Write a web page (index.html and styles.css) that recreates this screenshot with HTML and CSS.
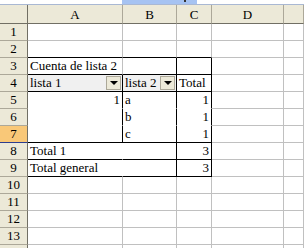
FILE: index.html
```html
<!DOCTYPE html>
<html>
<head>
<meta charset="utf-8">
<link rel="stylesheet" href="styles.css">
</head>
<body>
<div class="sheet">
  <div class="strip"><div class="strip-white"></div><div class="strip-blue"><span class="mark"></span></div><div class="strip-rest"></div></div>
  <div class="grid">
    <div class="ch corner"></div><div class="ch">A</div><div class="ch">B</div><div class="ch">C</div><div class="ch">D</div><div class="ch last"></div>

    <div class="rh">1</div><div class="c"></div><div class="c"></div><div class="c"></div><div class="c"></div><div class="c"></div>
    <div class="rh">2</div><div class="c bb"></div><div class="c bb"></div><div class="c bb"></div><div class="c"></div><div class="c"></div>

    <div class="rh">3</div><div class="c bb">Cuenta de lista 2</div><div class="c bb br"></div><div class="c bb br"></div><div class="c"></div><div class="c"></div>

    <div class="rh">4</div>
    <div class="c bb br fld">lista 1<span class="dd"><span class="tri"></span></span></div>
    <div class="c bb br fld">lista 2<span class="dd"><span class="tri"></span></span></div>
    <div class="c bb br">Total</div><div class="c"></div><div class="c"></div>

    <div class="rh">5</div><div class="c nb br num">1</div><div class="c nb br">a</div><div class="c nb br num">1</div><div class="c"></div><div class="c"></div>
    <div class="rh">6</div><div class="c nb br"></div><div class="c nb br">b</div><div class="c nb br num">1</div><div class="c"></div><div class="c"></div>
    <div class="rh sel">7</div><div class="c bb br"></div><div class="c bb br">c</div><div class="c bb br num">1</div><div class="c"></div><div class="c"></div>

    <div class="rh">8</div><div class="c bb nr">Total 1</div><div class="c bb br"></div><div class="c bb br num">3</div><div class="c"></div><div class="c"></div>
    <div class="rh">9</div><div class="c bb nr">Total general</div><div class="c bb br"></div><div class="c bb br num">3</div><div class="c"></div><div class="c"></div>

    <div class="rh">10</div><div class="c"></div><div class="c"></div><div class="c"></div><div class="c"></div><div class="c"></div>
    <div class="rh">11</div><div class="c"></div><div class="c"></div><div class="c"></div><div class="c"></div><div class="c"></div>
    <div class="rh">12</div><div class="c"></div><div class="c"></div><div class="c"></div><div class="c"></div><div class="c"></div>
    <div class="rh">13</div><div class="c"></div><div class="c"></div><div class="c"></div><div class="c"></div><div class="c"></div>
    <div class="rh"></div><div class="c"></div><div class="c"></div><div class="c"></div><div class="c"></div><div class="c"></div>
  </div>
</div>
</body>
</html>
```

FILE: styles.css
```css
html, body {
  margin: 0;
  padding: 0;
  background: #ffffff;
  overflow: hidden;
}
.sheet {
  width: 304px;
  height: 248px;
  overflow: hidden;
  font-family: "Liberation Serif", "Times New Roman", serif;
  font-size: 13px;
  color: #000000;
}
.strip {
  display: flex;
  height: 4px;
  border-bottom: 1px solid #a9b8d3;
}
.strip-white {
  width: 122px;
  background: #ffffff;
}
.strip-blue {
  width: 75px;
  background: #a6c3f2;
  position: relative;
}
.mark {
  position: absolute;
  left: 62px;
  top: 0;
  width: 2px;
  height: 2px;
  background: #333333;
}
.strip-rest {
  flex: 1;
  background: #ffffff;
}
.grid {
  display: grid;
  grid-template-columns: 28px 95px 54px 35px 72px 1fr;
  grid-template-rows: 19px repeat(14, 17px);
}
.grid > div {
  box-sizing: border-box;
  white-space: nowrap;
  overflow: visible;
}
.ch {
  background: #ece9d8;
  border-right: 1px solid #aca899;
  border-bottom: 1px solid #716f64;
  text-align: center;
  padding-top: 2px;
  line-height: 16px;
}
.ch.corner {
  border-right-color: #716f64;
}
.rh {
  background: #ece9d8;
  border-right: 1px solid #716f64;
  border-bottom: 1px solid #aca899;
  text-align: center;
  line-height: 16px;
}
.rh.sel {
  background: #f9c878;
  border-bottom-color: #2c3d8f;
}
.c {
  border-right: 1px solid #c0c0c0;
  border-bottom: 1px solid #c0c0c0;
  padding: 0 2px;
  line-height: 16px;
  position: relative;
}
.c.bb { border-bottom-color: #000000; }
.c.br { border-right-color: #000000; }
.c.nb { border-bottom-color: #ffffff; }
.c.nr { border-right-color: #ffffff; }
.c.num { text-align: right; }
.c.fld { background: #f0f0f0; }
.dd {
  position: absolute;
  right: 1px;
  top: 1px;
  width: 15px;
  height: 14px;
  box-sizing: border-box;
  background: #ece9d8;
  border: 1px solid #aca899;
  display: flex;
  align-items: center;
  justify-content: center;
}
.tri {
  width: 0;
  height: 0;
  border-left: 4px solid transparent;
  border-right: 4px solid transparent;
  border-top: 4px solid #000000;
}
```
